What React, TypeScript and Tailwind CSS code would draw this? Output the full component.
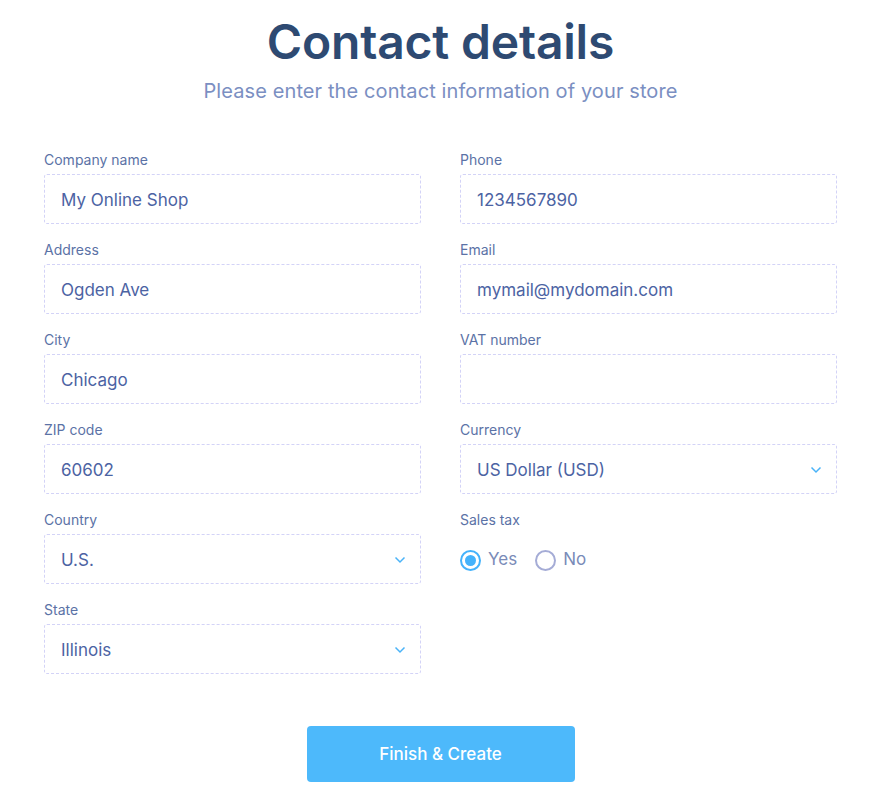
import React from "react";

const Field = ({ label, value, select }: { label: string; value?: string; select?: boolean }) => (
  <div className="flex flex-col">
    <div className="text-[14px] leading-[18px] text-[#5b72a6] pt-[2px] mb-[5px]">{label}</div>
    <div className="h-[50px] border border-dashed border-[#d3d3f7] rounded-[3px] flex items-center pl-[16px] pr-[14px] justify-between">
      <span className="text-[17px] text-[#4c63a3] pt-[4px]">{value}</span>
      {select && (
        <svg width="12" height="8" viewBox="0 0 12 8" fill="none" className="mt-[2px]">
          <path d="M1.5 1.5 L6 6 L10.5 1.5" stroke="#4ab3f8" strokeWidth="1.5" />
        </svg>
      )}
    </div>
  </div>
);

export default function App() {
  return (
    <div className="w-[881px] h-[800px] bg-white" style={{ fontFamily: "Inter, 'Noto Sans', sans-serif" }}>
      <div className="pt-[13px] flex flex-col items-center">
        <h1 className="text-[48px] leading-[58px] font-semibold text-[#2e4a72] tracking-[-0.2px]">Contact details</h1>
        <p className="mt-[7px] text-[20px] leading-[26px] text-[#7b8fc2] tracking-[0.1px]">Please enter the contact information of your store</p>
      </div>
      <div className="mt-[45px] px-[44px] grid grid-cols-2 gap-x-[39px]">
        <div className="flex flex-col gap-[15px]">
          <Field label="Company name" value="My Online Shop" />
          <Field label="Address" value="Ogden Ave" />
          <Field label="City" value="Chicago" />
          <Field label="ZIP code" value="60602" />
          <Field label="Country" value="U.S." select />
          <Field label="State" value="Illinois" select />
        </div>
        <div className="flex flex-col gap-[15px]">
          <Field label="Phone" value="1234567890" />
          <Field label="Email" value="mymail@mydomain.com" />
          <Field label="VAT number" value="" />
          <Field label="Currency" value="US Dollar (USD)" select />
          <div className="flex flex-col">
            <div className="text-[14px] leading-[18px] text-[#5b72a6] pt-[2px] mb-[5px]">Sales tax</div>
            <div className="h-[50px] flex items-center gap-[18px] pt-[2px]">
              <div className="flex items-center gap-[7px]">
                <div className="w-[21px] h-[21px] rounded-full border-[2px] border-[#44b2fb] flex items-center justify-center">
                  <div className="w-[11px] h-[11px] rounded-full bg-[#44b2fb]" />
                </div>
                <span className="text-[17px] text-[#7a8bb8]">Yes</span>
              </div>
              <div className="flex items-center gap-[7px]">
                <div className="w-[21px] h-[21px] rounded-full border-[2px] border-[#a5acd6]" />
                <span className="text-[17px] text-[#7a8bb8]">No</span>
              </div>
            </div>
          </div>
        </div>
      </div>
      <div className="mt-[52px] flex justify-center">
        <button className="w-[268px] h-[56px] rounded-[4px] bg-[#4db9fb] text-white text-[17px] font-medium pt-[2px]">Finish &amp; Create</button>
      </div>
    </div>
  );
}
